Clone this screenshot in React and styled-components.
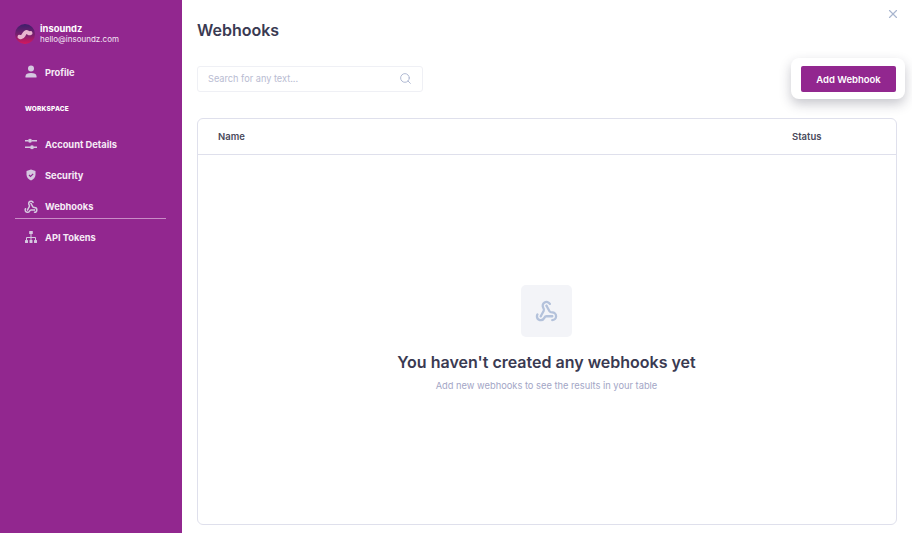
import React from 'react';
import styled, { createGlobalStyle } from 'styled-components';
import { Search, X } from 'lucide-react';

const GlobalStyle = createGlobalStyle`
  html, body {
    margin: 0;
    padding: 0;
    background: #ffffff;
  }
  body {
    font-family: 'Inter', 'Open Sans', sans-serif;
  }
  * {
    box-sizing: border-box;
  }
`;

const UserIcon = () => (
  <svg width="14" height="14" viewBox="0 0 14 14" fill="#d5c8e0">
    <circle cx="7" cy="3.6" r="3" />
    <path d="M1.5 12.500v-1.300C1.500 9.200 3.600 8 7 8s5.500 1.200 5.500 3.200v1.300z" />
  </svg>
);

const ShieldIcon = () => (
  <svg width="14" height="14" viewBox="0 0 14 14">
    <path d="M7 1.500l4.500 1.500v3.500c0 2.900-2 4.900-4.500 6-2.500-1.100-4.500-3.100-4.500-6V3z" fill="#d5c8e0" />
    <path d="M5 7l1.500 1.500L9.200 5.800" fill="none" stroke="#92278f" strokeWidth="1.200" />
  </svg>
);

const SlidersIcon = () => (
  <svg width="14" height="14" viewBox="0 0 14 14" fill="#d5c8e0" stroke="#d5c8e0">
    <path d="M1 3.800h3M8 3.800h5M1 10.200h5M10 10.200h3" strokeWidth="1.400" fill="none" />
    <circle cx="6" cy="3.800" r="2" stroke="none" />
    <circle cx="8" cy="10.200" r="2" stroke="none" />
  </svg>
);

const TreeIcon = () => (
  <svg width="14" height="14" viewBox="0 0 14 14" fill="#d5c8e0">
    <rect x="5.200" y="1" width="3.600" height="3" rx=".5" />
    <rect x="1" y="10" width="3" height="3" rx=".5" />
    <rect x="5.500" y="10" width="3" height="3" rx=".5" />
    <rect x="10" y="10" width="3" height="3" rx=".5" />
    <path d="M7 4v6M2.500 10V7.500h9V10" fill="none" stroke="#d5c8e0" strokeWidth="1" />
  </svg>
);

// lucide's webhook outline with rings on the three ends, as in the reference
const WebhookIcon = ({ size, color, weight }) => (
  <svg width={size} height={size} viewBox="0 0 24 24" fill="none" stroke={color} strokeWidth={weight} strokeLinecap="round">
    <path d="M18 16.980h-5.990c-1.100 0-1.950.94-2.480 1.900A4 4 0 0 1 2 17c.01-.7.2-1.400.57-2" />
    <path d="m6 17 3.130-5.780c.53-.97.1-2.180-.5-3.100a4 4 0 1 1 6.890-4.060" />
    <path d="m12 6 3.130 5.730C15.660 12.700 16.900 13 18 13a4 4 0 0 1 0 8" />
    <circle cx="6" cy="17" r="1" fill={color} stroke="none" />
    <circle cx="12" cy="6" r="1" fill={color} stroke="none" />
    <circle cx="18" cy="17" r="1" fill={color} stroke="none" />
  </svg>
);

const Logo = () => (
  <svg width="20" height="20" viewBox="0 0 20 20">
    <defs>
      <linearGradient id="logoFill" x1="0" y1="0" x2="0" y2="1">
        <stop offset="0" stopColor="#3b1f6b" />
        <stop offset="0.55" stopColor="#7c1f6f" />
        <stop offset="1" stopColor="#d8175c" />
      </linearGradient>
    </defs>
    <circle cx="10" cy="10" r="10" fill="url(#logoFill)" />
    <path
      d="M4.500 12.800c2 .8 3.200 0 4-1.500s1.800-3.600 3.600-3.200 1.500 1.700 3.400 1"
      fill="none"
      stroke="#e9b4cf"
      strokeWidth="4"
      strokeLinecap="round"
    />
  </svg>
);

const navItems = [
  { label: 'Account Details', icon: <SlidersIcon /> },
  { label: 'Security', icon: <ShieldIcon /> },
  { label: 'Webhooks', icon: <WebhookIcon size={14} color="#d5c8e0" weight={2.6} />, active: true },
  { label: 'API Tokens', icon: <TreeIcon /> },
];

export default function App() {
  return (
    <>
      <GlobalStyle />
      <Page>
        <Sidebar>
          <Account>
            <Logo />
            <AccountText>
              <AccountName>insoundz</AccountName>
              <AccountMail>hello@insoundz.com</AccountMail>
            </AccountText>
          </Account>
          <NavItem>
            <NavIcon><UserIcon /></NavIcon>
            Profile
          </NavItem>
          <SectionLabel>WORKSPACE</SectionLabel>
          <NavList>
            {navItems.map((item) => (
              <NavItem key={item.label} $active={item.active}>
                <NavIcon>{item.icon}</NavIcon>
                {item.label}
              </NavItem>
            ))}
          </NavList>
        </Sidebar>

        <Main>
          <CloseButton aria-label="Close">
            <X size={14} strokeWidth={2} />
          </CloseButton>
          <Title>Webhooks</Title>
          <Toolbar>
            <SearchBox>
              <SearchInput placeholder="Search for any text..." />
              <Search size={13} strokeWidth={1.7} color="#aab4cf" />
            </SearchBox>
            <ButtonCard>
              <AddButton>Add Webhook</AddButton>
            </ButtonCard>
          </Toolbar>
          <Table>
            <TableHead>
              <span>Name</span>
              <StatusHead>Status</StatusHead>
            </TableHead>
            <EmptyState>
              <EmptyIcon>
                <WebhookIcon size={23} color="#b4c2db" weight={2.4} />
              </EmptyIcon>
              <EmptyTitle>You haven't created any webhooks yet</EmptyTitle>
              <EmptyText>Add new webhooks to see the results in your table</EmptyText>
            </EmptyState>
          </Table>
        </Main>
      </Page>
    </>
  );
}

const Page = styled.div`
  display: flex;
  width: 912px;
  height: 533px;
  overflow: hidden;
`;

const Sidebar = styled.aside`
  width: 182px;
  flex-shrink: 0;
  background: #92278f;
  padding: 22px 16px 0 15px;
  color: #ffffff;
`;

const Account = styled.div`
  display: flex;
  align-items: center;
  gap: 5px;
  height: 24px;
  margin-bottom: 11px;
`;

const AccountText = styled.div`
  display: flex;
  flex-direction: column;
  line-height: 11px;
`;

const AccountName = styled.span`
  font-size: 9.4px;
  font-weight: 700;
`;

const AccountMail = styled.span`
  font-size: 8px;
  color: #f3e6f3;
`;

const SectionLabel = styled.div`
  margin: 17px 0 16px 10px;
  font-size: 6.5px;
  font-weight: 800;
  letter-spacing: 0.2px;
  line-height: 8px;
`;

const NavList = styled.div`
  display: flex;
  flex-direction: column;
`;

const NavItem = styled.div`
  display: flex;
  align-items: center;
  height: ${(p) => (p.$active ? '28px' : '31px')};
  padding-left: 9px;
  padding-top: ${(p) => (p.$active ? '4px' : '0')};
  margin-bottom: ${(p) => (p.$active ? '3px' : '0')};
  font-size: 9.3px;
  font-weight: 700;
  color: #f6ebf6;
  border-bottom: 1px solid ${(p) => (p.$active ? '#c98cc7' : 'transparent')};
`;

const NavIcon = styled.span`
  display: flex;
  align-items: center;
  justify-content: center;
  width: 14px;
  margin-right: 7px;
`;

const Main = styled.main`
  position: relative;
  flex: 1;
  display: flex;
  flex-direction: column;
  padding: 19px 15px 8px;
  background: #ffffff;
`;

const CloseButton = styled.button`
  position: absolute;
  top: 7px;
  right: 12px;
  display: flex;
  padding: 0;
  border: none;
  background: none;
  color: #a9b6cf;
`;

const Title = styled.h1`
  margin: 0;
  font-size: 16px;
  line-height: 22px;
  font-weight: 600;
  color: #3a3a52;
`;

const Toolbar = styled.div`
  display: flex;
  justify-content: space-between;
  align-items: center;
  height: 41px;
  margin: 17px -8px 19px 0;
`;

const SearchBox = styled.div`
  display: flex;
  align-items: center;
  justify-content: space-between;
  width: 226px;
  height: 26px;
  padding: 0 10px;
  border: 1px solid #eff0f5;
  border-radius: 3px;
`;

const SearchInput = styled.input`
  flex: 1;
  min-width: 0;
  padding: 0;
  border: none;
  outline: none;
  font-family: inherit;
  font-size: 9.2px;
  color: #3a3a52;

  &::placeholder {
    color: #b9bcd2;
    opacity: 1;
  }
`;

const ButtonCard = styled.div`
  padding: 8px 9px 7px 10px;
  background: #ffffff;
  border-radius: 8px;
  box-shadow: 0 5px 12px rgba(40, 40, 60, 0.26);
`;

const AddButton = styled.button`
  display: block;
  width: 95px;
  height: 26px;
  padding: 0;
  border: none;
  border-radius: 2px;
  background: #92278f;
  color: #ffffff;
  font-family: inherit;
  font-size: 9.5px;
  font-weight: 600;
`;

const Table = styled.section`
  flex: 1;
  display: flex;
  flex-direction: column;
  border: 1px solid #dfe0ec;
  border-radius: 6px;
`;

const TableHead = styled.div`
  display: flex;
  align-items: center;
  height: 36px;
  padding-left: 20px;
  border-bottom: 1px solid #dfe0ec;
  font-size: 9.5px;
  font-weight: 600;
  color: #4a4a5c;
`;

const StatusHead = styled.span`
  margin-left: auto;
  width: 104px;
`;

const EmptyState = styled.div`
  flex: 1;
  display: flex;
  flex-direction: column;
  align-items: center;
  padding-top: 130px;
  padding-right: 1px;
`;

const EmptyIcon = styled.div`
  display: flex;
  align-items: center;
  justify-content: center;
  width: 51px;
  height: 52px;
  border-radius: 5px;
  background: #f3f4f8;
`;

const EmptyTitle = styled.h2`
  margin: 14px 0 0;
  font-size: 16px;
  line-height: 22px;
  font-weight: 600;
  color: #3a3a52;
`;

const EmptyText = styled.p`
  margin: 7px 0 0;
  font-size: 9.3px;
  line-height: 12px;
  color: #a3a6c6;
`;
